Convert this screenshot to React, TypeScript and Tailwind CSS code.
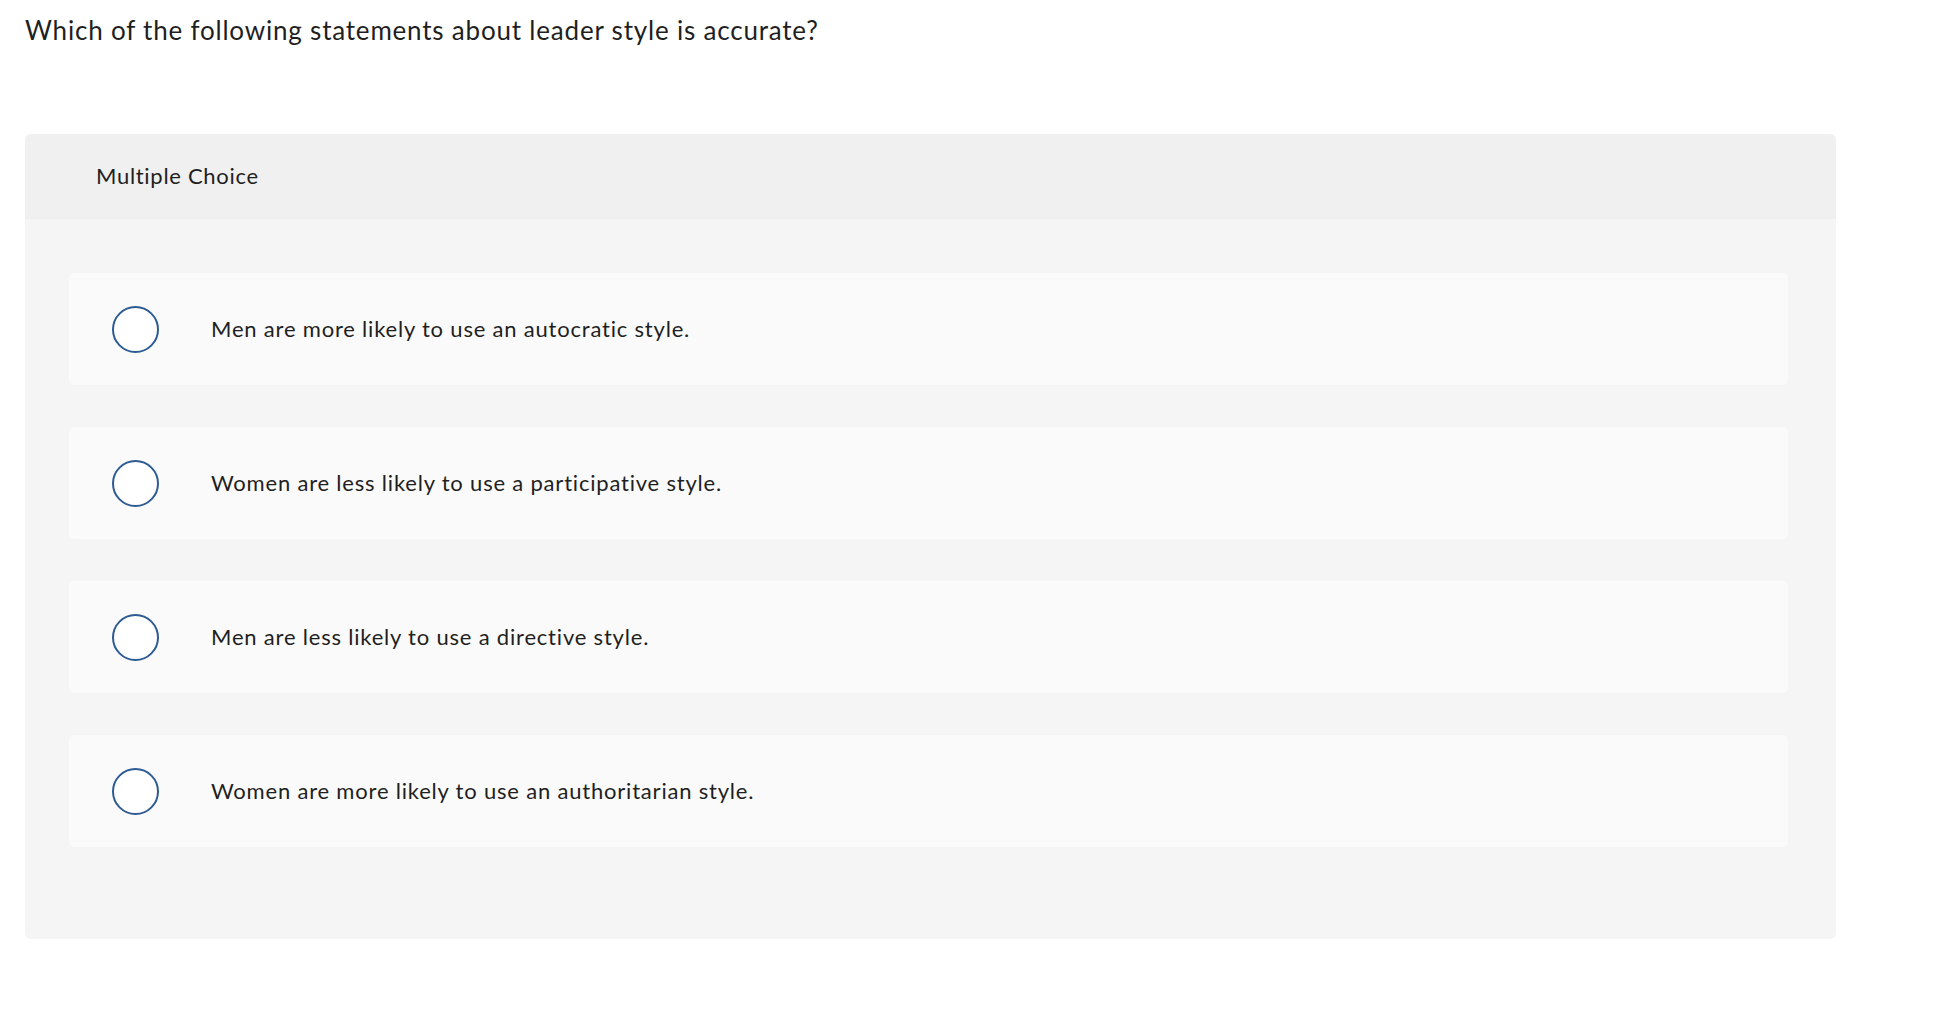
import React from 'react';

const options: string[] = [
  'Men are more likely to use an autocratic style.',
  'Women are less likely to use a participative style.',
  'Men are less likely to use a directive style.',
  'Women are more likely to use an authoritarian style.',
];

const OptionRow: React.FC<{ label: string }> = ({ label }) => {
  return (
    <div className="flex flex-row items-center h-[112px] rounded-[5px] bg-[#fafafa] pl-[43px]">
      <div className="w-[47px] h-[47px] shrink-0 rounded-full border-2 border-[#2d5b92] bg-white" />
      <p className="ml-[52px] text-[22px] leading-[28px] tracking-[0.8px] text-[#1f1f1f]">{label}</p>
    </div>
  );
};

export default function App() {
  return (
    <div
      className="min-h-screen w-full bg-white px-[25px] pt-[14px]"
      style={{ fontFamily: 'Lato, "Noto Sans", sans-serif' }}
    >
      {/* Question */}
      <h1 className="text-[26px] leading-[32px] font-normal tracking-[0.8px] text-[#1f1f1f]">
        Which of the following statements about leader style is accurate?
      </h1>

      {/* Answer panel */}
      <div className="mt-[88px] w-[1811px] rounded-[6px] overflow-hidden bg-[#f5f5f5]">
        <div className="h-[85px] bg-[#f0f0f0] pl-[71px] flex items-center pb-[2px]">
          <span className="text-[22px] tracking-[0.7px] text-[#1f1f1f]">Multiple Choice</span>
        </div>
        <div className="flex flex-col gap-[42px] pt-[54px] pb-[92px] pl-[44px] pr-[48px]">
          {options.map((label) => (
            <OptionRow key={label} label={label} />
          ))}
        </div>
      </div>
    </div>
  );
}
